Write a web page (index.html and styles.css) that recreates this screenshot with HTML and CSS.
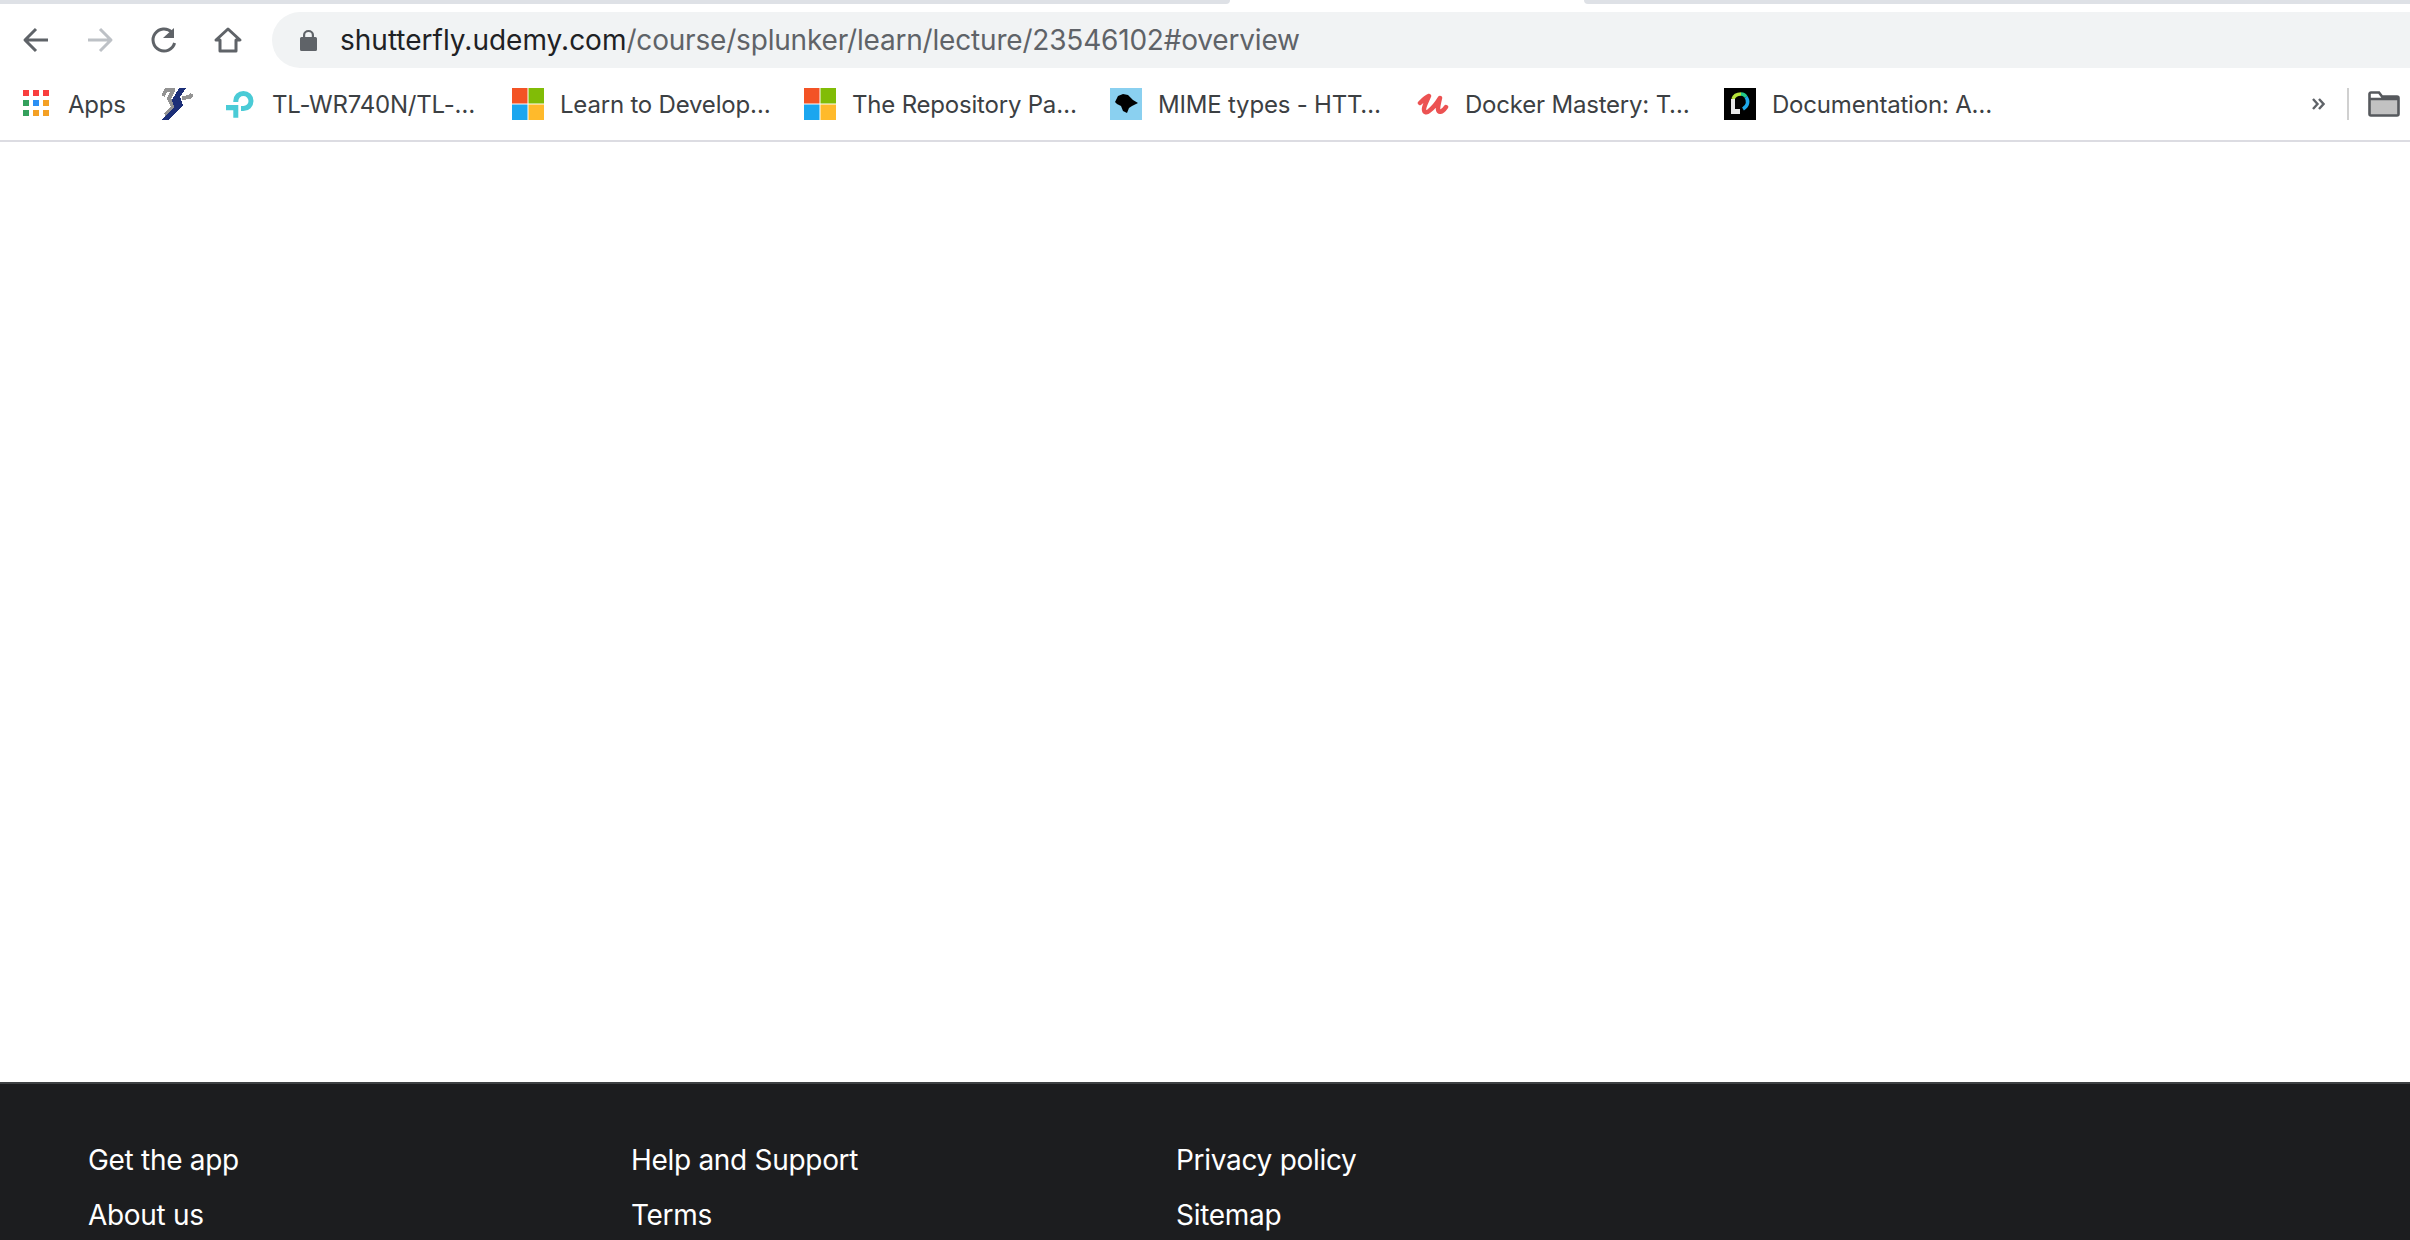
FILE: index.html
```html
<!DOCTYPE html>
<html lang="en">
<head>
    <meta charset="UTF-8">
    <title>shutterfly.udemy.com</title>
    <link rel="stylesheet" href="styles.css">
</head>
<body>
    <div class="tabstrip">
        <div class="tab-left"></div>
        <div class="tab-active"></div>
        <div class="tab-right"></div>
    </div>

    <div class="toolbar">
        <div class="nav-btn">
            <svg class="nav-icon" viewBox="0 0 32 32"><path d="M28 16H5M16 5 5 16l11 11"/></svg>
        </div>
        <div class="nav-btn nav-btn-off">
            <svg class="nav-icon" viewBox="0 0 32 32"><path d="M4 16h23M16 5l11 11-11 11"/></svg>
        </div>
        <div class="nav-btn">
            <svg class="nav-icon" viewBox="0 0 32 32">
                <path d="M23.8 8.2A11 11 0 1 0 26.6 19"/>
                <path class="solid" d="M26 4v10H15z"/>
            </svg>
        </div>
        <div class="nav-btn">
            <svg class="nav-icon" viewBox="0 0 32 32"><path d="M8 27V16H4L16 5l12 11h-4v11z"/></svg>
        </div>
        <div class="omnibox">
            <svg class="lock" viewBox="0 0 17 21">
                <path fill-rule="evenodd" d="M1.5 7H3V5a5.5 5 0 0 1 11 0v2h1.5A1.5 1.5 0 0 1 17 8.5v11a1.5 1.5 0 0 1-1.5 1.5h-14A1.5 1.5 0 0 1 0 19.5v-11A1.5 1.5 0 0 1 1.5 7zM5.2 7h6.6V5a3.3 3 0 0 0-6.6 0z"/>
            </svg>
            <span class="url-host">shutterfly.udemy.com</span><span class="url-path">/course/splunker/learn/lecture/23546102#overview</span>
        </div>
    </div>

    <div class="bookmarks">
        <div class="bookmark">
            <svg class="favicon" viewBox="0 0 32 32">
                <rect x="3" y="2" width="6" height="6" fill="#f93e3e"/>
                <rect x="13" y="2" width="6" height="6" fill="#f93e3e"/>
                <rect x="23" y="2" width="6" height="6" fill="#f93e3e"/>
                <rect x="3" y="12" width="6" height="6" fill="#34a05c"/>
                <rect x="13" y="12" width="6" height="6" fill="#2a8ff5"/>
                <rect x="23" y="12" width="6" height="6" fill="#f4a025"/>
                <rect x="3" y="22" width="6" height="6" fill="#34a05c"/>
                <rect x="13" y="22" width="6" height="6" fill="#f4a025"/>
                <rect x="23" y="22" width="6" height="6" fill="#f4a025"/>
            </svg>
            <span>Apps</span>
        </div>
        <div class="bookmark">
            <svg class="favicon pixel" viewBox="0 0 32 32">
                <path d="M2 8 5 2h9M12 3 8 10l4 9M13 19l-9 8M21 10l8-1 2-3" fill="none" stroke="#939393" stroke-width="4"/>
                <path d="M18 0h7l-6 9 3 8L8 32H1l12-13-2-7z" fill="#1c2f78"/>
            </svg>
        </div>
        <div class="bookmark">
            <svg class="favicon" viewBox="0 0 32 32">
                <path d="M11.8 14v-1a7.6 7.6 0 1 1 7.6 7.6H17" fill="none" stroke="#4acbd6" stroke-width="5"/>
                <path d="M2 17h12.3v12.7h-5V22.3H2z" fill="#4acbd6"/>
            </svg>
            <span>TL-WR740N/TL-…</span>
        </div>
        <div class="bookmark">
            <svg class="favicon" viewBox="0 0 32 32">
                <rect width="15.5" height="15.5" fill="#f35325"/>
                <rect x="16.5" width="15.5" height="15.5" fill="#81bc06"/>
                <rect y="16.5" width="15.5" height="15.5" fill="#1ba6ef"/>
                <rect x="16.5" y="16.5" width="15.5" height="15.5" fill="#ffba2b"/>
            </svg>
            <span>Learn to Develop…</span>
        </div>
        <div class="bookmark">
            <svg class="favicon" viewBox="0 0 32 32">
                <rect width="15.5" height="15.5" fill="#f35325"/>
                <rect x="16.5" width="15.5" height="15.5" fill="#81bc06"/>
                <rect y="16.5" width="15.5" height="15.5" fill="#1ba6ef"/>
                <rect x="16.5" y="16.5" width="15.5" height="15.5" fill="#ffba2b"/>
            </svg>
            <span>The Repository Pa…</span>
        </div>
        <div class="bookmark">
            <svg class="favicon" viewBox="0 0 32 32">
                <rect width="32" height="32" fill="#8ad0f0"/>
                <path d="M5 14 8 8l5-2 5 1 5 5 5 3-6 3-3 2-2 5-4-2-2-5-4-2z" fill="#000"/>
            </svg>
            <span>MIME types - HTT…</span>
        </div>
        <div class="bookmark">
            <svg class="favicon" viewBox="0 0 32 32">
                <path d="M3 15C6 12 9 9 12 8 10 13 7 18 7 21 7 25 10 25 12 23 16 20 20 15 23 10 22 14 21 18 21 21 21 25 25 25 29 19" fill="none" stroke="#ec5252" stroke-width="4.5" stroke-linecap="round" stroke-linejoin="round"/>
            </svg>
            <span>Docker Mastery: T…</span>
        </div>
        <div class="bookmark">
            <svg class="favicon" viewBox="0 0 32 32">
                <rect width="32" height="32" fill="#000"/>
                <path d="M9 11c1-3 4-5 8-5" fill="none" stroke="#b5e23a" stroke-width="3.5"/>
                <path d="M17 6c2 0 4 1 5 3" fill="none" stroke="#22c98a" stroke-width="3.5"/>
                <path d="M22 9c3 4 2 9-3 12" fill="none" stroke="#1fa8ea" stroke-width="3.5"/>
                <path d="M7 11h4v10h5v5H7z" fill="#e6e6e6"/>
            </svg>
            <span>Documentation: A…</span>
        </div>
        <svg class="chevrons" viewBox="0 0 13 12"><path d="M1 1l4.5 5L1 11M7 1l4.5 5L7 11"/></svg>
        <div class="bar-sep"></div>
        <svg class="folder" viewBox="0 0 32 26">
            <path d="M1.5 8h29v16.5h-29z" fill="#c2c2c2"/>
            <path d="M1.5 8V3A1.5 1.5 0 0 1 3 1.500h8l3 4h15A1.500 1.500 0 0 1 30.500 7v16a1.500 1.500 0 0 1-1.500 1.500H3A1.500 1.500 0 0 1 1.500 23zh29" fill="none" stroke="#56595d" stroke-width="2.6"/>
        </svg>
    </div>

    <div class="page-body"></div>

    <div class="footer">
        <ul class="footer-col">
            <li>Get the app</li>
            <li>About us</li>
        </ul>
        <ul class="footer-col">
            <li>Help and Support</li>
            <li>Terms</li>
        </ul>
        <ul class="footer-col">
            <li>Privacy policy</li>
            <li>Sitemap</li>
        </ul>
    </div>
</body>
</html>
```

FILE: styles.css
```css
/* General reset */
* {
    box-sizing: border-box;
    margin: 0;
    padding: 0;
}

body {
    height: 100vh;
    overflow: hidden;
    display: flex;
    flex-direction: column;
    background-color: #fff;
    font-family: Inter, 'Liberation Sans', sans-serif;
}

/* Tab strip */
.tabstrip {
    display: flex;
    flex: none;
    height: 4px;
}

.tab-left {
    width: 1230px;
    background-color: #dee1e6;
    border-bottom-right-radius: 8px;
}

.tab-active {
    width: 354px;
}

.tab-right {
    flex: 1;
    background-color: #dee1e6;
    border-bottom-left-radius: 8px;
}

/* Toolbar */
.toolbar {
    display: flex;
    flex: none;
    align-items: center;
    height: 56px;
    margin-top: 8px;
    padding-left: 4px;
}

.nav-btn {
    display: flex;
    justify-content: center;
    width: 64px;
}

.nav-icon {
    width: 32px;
    height: 32px;
    fill: none;
    stroke: #5f6368;
    stroke-width: 3;
    stroke-linejoin: round;
}

.nav-icon .solid {
    fill: #5f6368;
    stroke: none;
}

.nav-btn-off .nav-icon {
    stroke: #bdc1c6;
}

.omnibox {
    display: flex;
    flex: 1;
    align-items: center;
    height: 56px;
    margin-left: 12px;
    padding-left: 28px;
    border-radius: 28px 0 0 28px;
    background-color: #f1f3f4;
    font-size: 28px;
    white-space: nowrap;
}

.lock {
    width: 17px;
    height: 21px;
    margin-right: 23px;
    fill: #5f6368;
}

.url-host {
    color: #202124;
}

.url-path {
    color: #5f6368;
    letter-spacing: -0.19px;
}

/* Bookmarks bar */
.bookmarks {
    display: grid;
    flex: none;
    grid-template-columns: 141px 63px 288px 292px 306px 307px 307px 1fr auto auto auto;
    align-items: center;
    height: 74px;
    padding: 20px 10px 22px 20px;
    border-bottom: 2px solid #dcdce2;
}

.bookmark {
    display: flex;
    align-items: center;
    gap: 16px;
    font-size: 24px;
    letter-spacing: -0.2px;
    color: #3c4043;
    white-space: nowrap;
}

.favicon {
    flex: none;
    width: 32px;
    height: 32px;
}

.pixel {
    shape-rendering: crispEdges;
}

.chevrons {
    width: 13px;
    height: 12px;
    margin-right: 22px;
    fill: none;
    stroke: #5f6368;
    stroke-width: 2.4;
}

.bar-sep {
    width: 2px;
    height: 32px;
    margin-right: 19px;
    background-color: #d0d0d0;
}

.folder {
    width: 32px;
    height: 26px;
}

.page-body {
    flex: 1;
}

/* Footer */
.footer {
    display: grid;
    flex: none;
    grid-template-columns: 543px 545px 1fr;
    height: 158px;
    padding: 59px 0 0 88px;
    border-top: 2px solid #3e4143;
    background-color: #1c1d1f;
    color: #fff;
}

.footer-col {
    list-style: none;
    display: flex;
    flex-direction: column;
    gap: 21px;
    font-size: 28px;
    letter-spacing: -0.3px;
    line-height: 34px;
}
```
